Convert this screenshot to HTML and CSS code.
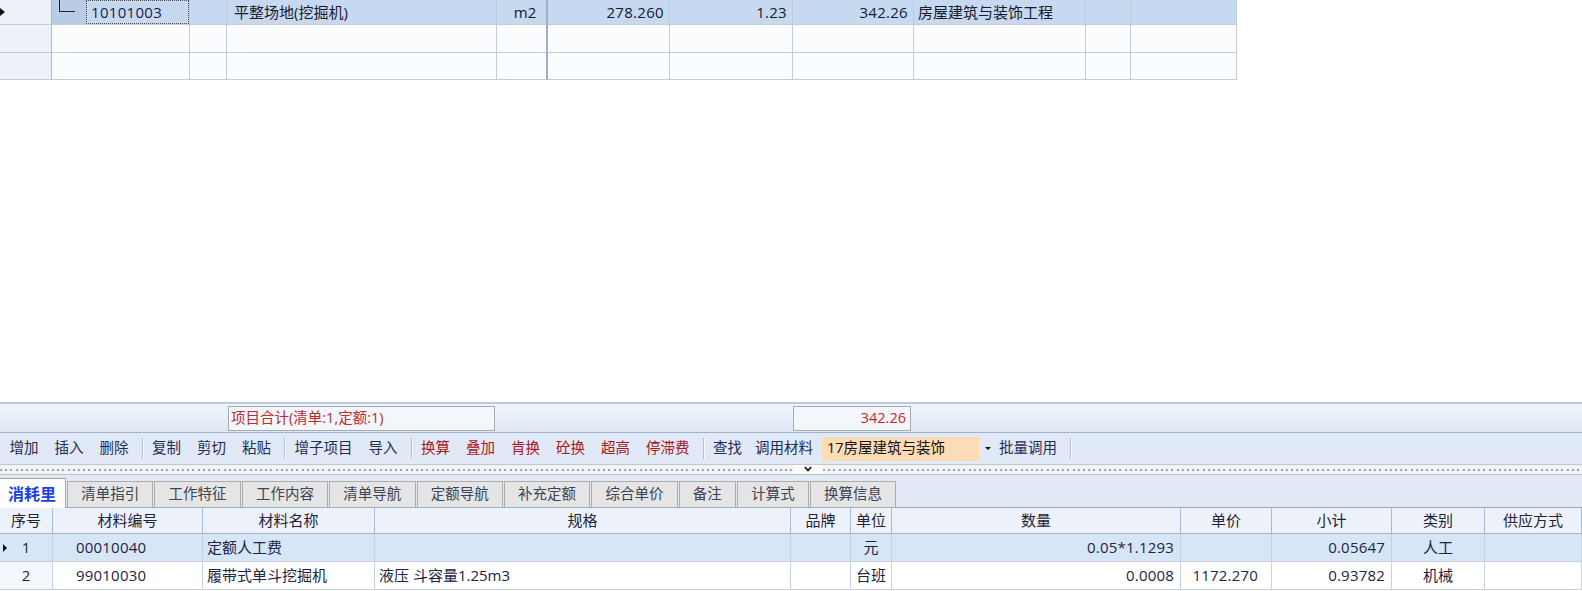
FILE: index.html
```html
<!DOCTYPE html>
<html lang="zh-CN">
<head>
<meta charset="utf-8">
<title>消耗量</title>
<link rel="stylesheet" href="styles.css">
</head>
<body>
<div class="app">
  <div class="top-area">
    <div class="tgrid">
      <div class="trow r1 sel">
        <div class="c rh"><span class="row-arrow"></span></div>
        <div class="c tree"><span class="indent"><span class="elbow"></span></span><span class="focus">10101003</span></div>
        <div class="c"></div>
        <div class="c name">平整场地(挖掘机)</div>
        <div class="c unit frozen">m2</div>
        <div class="c num">278.260</div>
        <div class="c num">1.23</div>
        <div class="c num">342.26</div>
        <div class="c txt">房屋建筑与装饰工程</div>
        <div class="c"></div>
        <div class="c"></div>
      </div>
      <div class="trow r2">
        <div class="c rh"></div>
        <div class="c"></div>
        <div class="c"></div>
        <div class="c"></div>
        <div class="c frozen"></div>
        <div class="c"></div>
        <div class="c"></div>
        <div class="c"></div>
        <div class="c"></div>
        <div class="c"></div>
        <div class="c"></div>
      </div>
      <div class="trow r3">
        <div class="c rh"></div>
        <div class="c"></div>
        <div class="c"></div>
        <div class="c"></div>
        <div class="c frozen"></div>
        <div class="c"></div>
        <div class="c"></div>
        <div class="c"></div>
        <div class="c"></div>
        <div class="c"></div>
        <div class="c"></div>
      </div>
    </div>
  </div>

  <div class="summary">
    <div class="sumbox sum-name">项目合计(清单:1,定额:1)</div>
    <div class="sumbox sum-total">342.26</div>
  </div>

  <div class="toolbar">
    <span class="tb">增加</span>
    <span class="tb">插入</span>
    <span class="tb">删除</span>
    <span class="sep"></span>
    <span class="tb">复制</span>
    <span class="tb">剪切</span>
    <span class="tb">粘贴</span>
    <span class="sep"></span>
    <span class="tb">增子项目</span>
    <span class="tb">导入</span>
    <span class="sep"></span>
    <span class="tb red">换算</span>
    <span class="tb red">叠加</span>
    <span class="tb red">肯换</span>
    <span class="tb red">砼换</span>
    <span class="tb red">超高</span>
    <span class="tb red">停滞费</span>
    <span class="sep"></span>
    <span class="tb">查找</span>
    <span class="tb tight">调用材料</span>
    <span class="combo">17房屋建筑与装饰</span>
    <span class="combo-btn"><span class="tri-down"></span></span>
    <span class="tb tight-l">批量调用</span>
    <span class="sep"></span>
  </div>

  <div class="splitter">
    <span class="dots dots-left"></span>
    <span class="handle"><svg width="8" height="6" viewBox="0 0 8 6"><path d="M0.8 1 L4 4.4 L7.2 1" fill="none" stroke="#1a1a1a" stroke-width="1.7"/></svg></span>
    <span class="dots dots-right"></span>
  </div>

  <div class="tabs">
    <span class="tab active">消耗里</span>
    <span class="tab">清单指引</span>
    <span class="tab">工作特征</span>
    <span class="tab">工作内容</span>
    <span class="tab">清单导航</span>
    <span class="tab">定额导航</span>
    <span class="tab">补充定额</span>
    <span class="tab">综合单价</span>
    <span class="tab">备注</span>
    <span class="tab">计算式</span>
    <span class="tab">换算信息</span>
  </div>

  <div class="bgrid">
    <div class="brow head">
      <div class="c">序号</div>
      <div class="c">材料编号</div>
      <div class="c">材料名称</div>
      <div class="c">规格</div>
      <div class="c">品牌</div>
      <div class="c">单位</div>
      <div class="c">数量</div>
      <div class="c">单价</div>
      <div class="c">小计</div>
      <div class="c">类别</div>
      <div class="c">供应方式</div>
    </div>
    <div class="brow sel">
      <div class="c seq"><span class="row-arrow small"></span>1</div>
      <div class="c code">00010040</div>
      <div class="c left">定额人工费</div>
      <div class="c left"></div>
      <div class="c"></div>
      <div class="c center">元</div>
      <div class="c right">0.05*1.1293</div>
      <div class="c right price"></div>
      <div class="c right">0.05647</div>
      <div class="c center">人工</div>
      <div class="c"></div>
    </div>
    <div class="brow">
      <div class="c seq">2</div>
      <div class="c code">99010030</div>
      <div class="c left">履带式单斗挖掘机</div>
      <div class="c left">液压 斗容量1.25m3</div>
      <div class="c"></div>
      <div class="c center">台班</div>
      <div class="c right">0.0008</div>
      <div class="c right price">1172.270</div>
      <div class="c right">0.93782</div>
      <div class="c center">机械</div>
      <div class="c"></div>
    </div>
  </div>
</div>
</body>
</html>
```

FILE: styles.css
```css
* { box-sizing: border-box; }
html, body { margin: 0; padding: 0; }
body {
  width: 1582px;
  height: 591px;
  overflow: hidden;
  background: #ffffff;
  font-family: "Open Sans", "Noto Sans CJK SC", sans-serif;
  color: #1c2340;
}
.app { display: flex; flex-direction: column; height: 591px; }

/* ---------- top grid ---------- */
.top-area { flex: none; height: 402px; background: #fff; }
.tgrid { width: 1237px; }
.trow {
  display: grid;
  grid-template-columns: 52px 138px 37px 270px 51px 122px 123px 121px 172px 45px 106px;
  background: #fbfcfe;
}
.trow.r1 { height: 25px; }
.trow.r2 { height: 28px; }
.trow.r3 { height: 27px; }
.trow.sel { background: #c6d9f1; }
.trow .c {
  border-right: 1px solid #c2cbd7;
  border-bottom: 1px solid #c2cbd7;
  display: flex;
  align-items: center;
  font-size: 15px;
  line-height: 1;
  white-space: nowrap;
  overflow: hidden;
  color: #15192e;
}
.trow .c.rh { background: #edf2fa; border-right-color: #a9bbd3; position: relative; }
.trow .c.frozen { border-right: 2px solid #9eafc8; }
.trow .c.tree { align-items: stretch; }
.indent { width: 34px; flex: none; background: #b8cce6; display: flex; align-items: flex-start; }
.elbow {
  margin-left: 7px;
  width: 16px;
  height: 12px;
  border-left: 1px solid #222;
  border-bottom: 1px solid #222;
}
.focus {
  flex: 1;
  display: flex;
  align-items: center;
  padding-left: 4px;
  border: 1px dotted #4a4a4a;
  color: #1b1b4a;
  letter-spacing: 0.3px;
}
.trow .c.name { padding-left: 7px; }
.trow .c.unit { justify-content: center; padding-left: 7px; }
.trow .c.num { justify-content: flex-end; padding-right: 5px; letter-spacing: 0.3px; }
.trow .c.txt { padding-left: 4px; }

.row-arrow {
  position: absolute;
  left: 0;
  top: 8px;
  width: 0;
  height: 0;
  border-left: 5px solid #111;
  border-top: 4px solid transparent;
  border-bottom: 4px solid transparent;
}
.row-arrow.small { left: 3px; top: 10px; border-left-width: 4px; }

/* ---------- summary ---------- */
.summary {
  flex: none;
  height: 31px;
  border-top: 2px solid #bccadd;
  border-bottom: 1px solid #9db2cf;
  background: linear-gradient(#eef4fc, #dfe9f6);
  display: flex;
  align-items: flex-start;
  padding-top: 2px;
}
.sumbox {
  height: 25px;
  border: 1px solid #a9aaad;
  background: #f3f6fb;
  color: #bf2b2f;
  font-size: 14.5px;
  line-height: 1;
  display: flex;
  align-items: center;
  white-space: nowrap;
}
.sum-name { margin-left: 228px; width: 267px; padding-left: 2px; }
.sum-total { margin-left: 298px; width: 118px; justify-content: flex-end; padding-right: 4px; }

/* ---------- toolbar ---------- */
.toolbar {
  flex: none;
  height: 31px;
  background: #e1e8f6;
  display: flex;
  align-items: center;
  padding-left: 1.5px;
}
.tb {
  font-size: 14.5px;
  line-height: 1;
  padding: 0 8px;
  color: #1f2d55;
  white-space: nowrap;
}
.tb.red { color: #ad151b; }
.tb.tight { padding-left: 5px; padding-right: 9px; }
.tb.tight-l { padding-left: 3px; }
.sep {
  width: 2px;
  height: 21px;
  margin-left: 5px;
  margin-right: 0.5px;
  border-left: 1px solid #b4c0d4;
  border-right: 1px solid #f7f9fd;
}
.combo {
  width: 157px;
  height: 24px;
  background: #fddcb6;
  color: #111;
  font-size: 14.5px;
  line-height: 1;
  display: flex;
  align-items: center;
  padding-left: 5px;
  white-space: nowrap;
}
.combo-btn {
  width: 17px;
  height: 24px;
  display: flex;
  align-items: center;
  justify-content: center;
}
.tri-down {
  width: 0;
  height: 0;
  border-top: 3px solid #111;
  border-left: 3px solid transparent;
  border-right: 3px solid transparent;
}

/* ---------- splitter ---------- */
.splitter {
  flex: none;
  height: 11px;
  background: #f2f3f5;
  border-top: 1px solid #c5c8cd;
  border-bottom: 1px solid #bcc0c7;
  display: flex;
  align-items: center;
}
.dots {
  height: 2px;
  background: repeating-linear-gradient(90deg, #9ea4ad 0 2px, transparent 2px 5.2px);
}
.dots-left { width: 793px; flex: none; }
.dots-right { flex: 1; }
.handle {
  width: 30px;
  height: 9px;
  display: flex;
  align-items: center;
  justify-content: center;
  background: #fafafa;
}
.handle svg { display: block; margin-top: -2px; }

/* ---------- tabs ---------- */
.tabs {
  flex: none;
  height: 33px;
  background: #e1e8f6;
  border-bottom: 1px solid #a2abb9;
  display: flex;
  align-items: flex-end;
}
.tab {
  height: 26px;
  padding: 0 13.2px;
  margin-right: 1px;
  background: #e5e5e6;
  border: 1px solid #acadaf;
  border-bottom: none;
  font-size: 14.5px;
  line-height: 1;
  color: #3d4452;
  display: flex;
  align-items: center;
  white-space: nowrap;
}
.tab.active {
  height: 30px;
  margin-bottom: -1px;
  padding: 1px 9px 0 8px;
  background: #ffffff;
  border-color: #a5a6a8;
  border-left: none;
  color: #1b3fe6;
  font-weight: bold;
  font-size: 16px;
}

/* ---------- bottom grid ---------- */
.bgrid { flex: none; }
.brow {
  display: grid;
  grid-template-columns: 53px 150px 172px 416px 60px 41px 289px 91px 120px 93px 97px;
  height: 28px;
  background: #ffffff;
}
.brow.head { height: 26px; background: #edf2fa; }
.brow.sel { background: #d7e6f7; }
.brow .c {
  border-right: 1px solid #c8d2de;
  border-bottom: 1px solid #c6d0dc;
  display: flex;
  align-items: center;
  font-size: 15px;
  line-height: 1;
  white-space: nowrap;
  overflow: hidden;
  color: #1c2545;
  position: relative;
}
.brow.head .c {
  justify-content: center;
  border-right-color: #a9bcd6;
  border-bottom-color: #9fb3cd;
  color: #1d2338;
}
.brow .c.seq { justify-content: center; }
.brow:not(.sel):not(.head) .c.seq { background: #f4f7fc; }
.brow .c.code { padding-left: 23px; letter-spacing: 0.2px; }
.brow .c.left { padding-left: 4px; }
.brow .c.center { justify-content: center; }
.brow .c.right { justify-content: flex-end; padding-right: 6px; letter-spacing: 0.2px; }
.brow .c.right.price { padding-right: 13px; }
```
